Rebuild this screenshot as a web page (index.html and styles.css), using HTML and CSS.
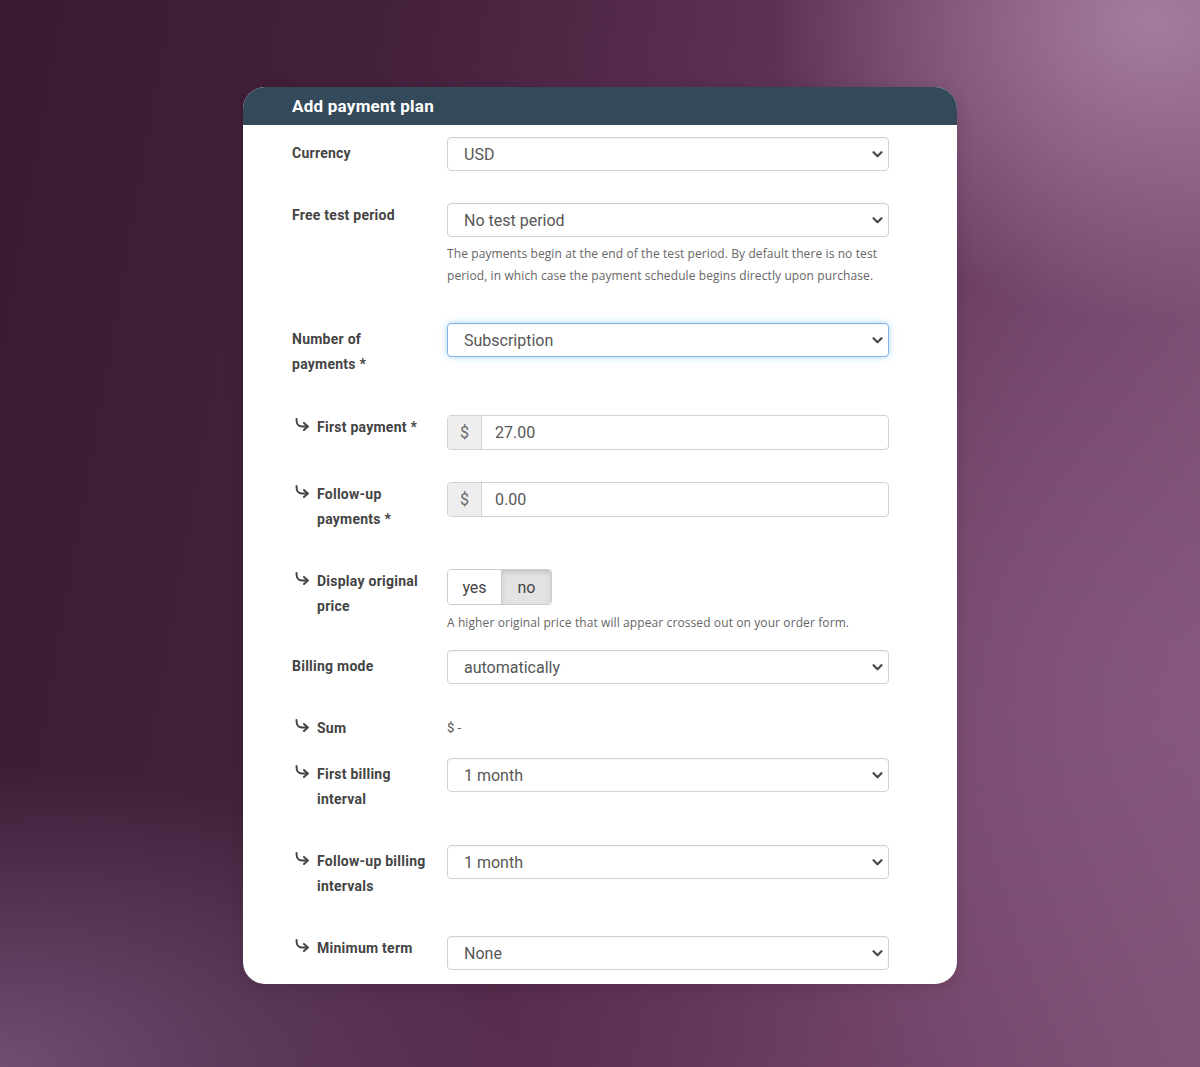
FILE: index.html
```html
<!DOCTYPE html>
<html lang="en">
<head>
<meta charset="utf-8">
<title>Add payment plan</title>
<link rel="stylesheet" href="styles.css">
</head>
<body>
<div class="page">
  <div class="card">
    <div class="card-head">Add payment plan</div>
    <div class="card-body">

      <div class="row">
        <div class="label">Currency</div>
        <div class="ctrl">
          <div class="select"><span>USD</span><svg class="chev" viewBox="0 0 12 8"><path d="M1.5 1.5 L6 6 L10.5 1.5"/></svg></div>
        </div>
      </div>

      <div class="row sp-32">
        <div class="label top">Free test period</div>
        <div class="ctrl">
          <div class="select"><span>No test period</span><svg class="chev" viewBox="0 0 12 8"><path d="M1.5 1.5 L6 6 L10.5 1.5"/></svg></div>
          <p class="help">The payments begin at the end of the test period. By default there is no test period, in which case the payment schedule begins directly upon purchase.</p>
        </div>
      </div>

      <div class="row sp-36">
        <div class="label">Number of payments&nbsp;*</div>
        <div class="ctrl">
          <div class="select focus"><span>Subscription</span><svg class="chev" viewBox="0 0 12 8"><path d="M1.5 1.5 L6 6 L10.5 1.5"/></svg></div>
        </div>
      </div>

      <div class="row sp-38">
        <div class="label top sub"><svg class="hook" viewBox="0 0 16 13"><path d="M2.5 1 C2.5 6 3.5 8.5 8 8.5 H13.5"/><path d="M10 5 L13.8 8.5 L10 12"/></svg><span>First payment&nbsp;*</span></div>
        <div class="ctrl">
          <div class="igroup"><span class="addon">$</span><span class="ival">27.00</span></div>
        </div>
      </div>

      <div class="row sp-32">
        <div class="label top sub"><svg class="hook" viewBox="0 0 16 13"><path d="M2.5 1 C2.5 6 3.5 8.5 8 8.5 H13.5"/><path d="M10 5 L13.8 8.5 L10 12"/></svg><span>Follow-up payments&nbsp;*</span></div>
        <div class="ctrl">
          <div class="igroup"><span class="addon">$</span><span class="ival">0.00</span></div>
        </div>
      </div>

      <div class="row sp-37">
        <div class="label top sub"><svg class="hook" viewBox="0 0 16 13"><path d="M2.5 1 C2.5 6 3.5 8.5 8 8.5 H13.5"/><path d="M10 5 L13.8 8.5 L10 12"/></svg><span>Display original price</span></div>
        <div class="ctrl">
          <div class="toggle"><span class="opt">yes</span><span class="opt on">no</span></div>
          <p class="help one">A higher original price that will appear crossed out on your order form.</p>
        </div>
      </div>

      <div class="row sp-16">
        <div class="label">Billing mode</div>
        <div class="ctrl">
          <div class="select"><span>automatically</span><svg class="chev" viewBox="0 0 12 8"><path d="M1.5 1.5 L6 6 L10.5 1.5"/></svg></div>
        </div>
      </div>

      <div class="row sp-28">
        <div class="label sub"><svg class="hook" viewBox="0 0 16 13"><path d="M2.5 1 C2.5 6 3.5 8.5 8 8.5 H13.5"/><path d="M10 5 L13.8 8.5 L10 12"/></svg><span>Sum</span></div>
        <div class="ctrl">
          <div class="static">$ -</div>
        </div>
      </div>

      <div class="row sp-17">
        <div class="label sub"><svg class="hook" viewBox="0 0 16 13"><path d="M2.5 1 C2.5 6 3.5 8.5 8 8.5 H13.5"/><path d="M10 5 L13.8 8.5 L10 12"/></svg><span>First billing interval</span></div>
        <div class="ctrl">
          <div class="select"><span>1 month</span><svg class="chev" viewBox="0 0 12 8"><path d="M1.5 1.5 L6 6 L10.5 1.5"/></svg></div>
        </div>
      </div>

      <div class="row sp-33">
        <div class="label sub"><svg class="hook" viewBox="0 0 16 13"><path d="M2.5 1 C2.5 6 3.5 8.5 8 8.5 H13.5"/><path d="M10 5 L13.8 8.5 L10 12"/></svg><span>Follow-up billing intervals</span></div>
        <div class="ctrl">
          <div class="select"><span>1 month</span><svg class="chev" viewBox="0 0 12 8"><path d="M1.5 1.5 L6 6 L10.5 1.5"/></svg></div>
        </div>
      </div>

      <div class="row sp-37">
        <div class="label top sub"><svg class="hook" viewBox="0 0 16 13"><path d="M2.5 1 C2.5 6 3.5 8.5 8 8.5 H13.5"/><path d="M10 5 L13.8 8.5 L10 12"/></svg><span>Minimum term</span></div>
        <div class="ctrl">
          <div class="select"><span>None</span><svg class="chev" viewBox="0 0 12 8"><path d="M1.5 1.5 L6 6 L10.5 1.5"/></svg></div>
        </div>
      </div>

    </div>
  </div>
</div>
</body>
</html>
```
FILE: styles.css
```css
* { box-sizing: border-box; }

html, body {
  margin: 0;
  padding: 0;
}

body {
  width: 1200px;
  height: 1067px;
  overflow: hidden;
  font-family: Roboto, "Liberation Sans", Arial, sans-serif;
  background:
    radial-gradient(ellipse 380px 300px at 96% 2%, rgba(172, 134, 166, 0.85), rgba(172, 134, 166, 0) 100%),
    radial-gradient(ellipse 520px 300px at 0% 100%, rgba(120, 86, 124, 0.85), rgba(120, 86, 124, 0) 100%),
    radial-gradient(ellipse 520px 460px at 100% 65%, rgba(142, 94, 132, 0.6), rgba(142, 94, 132, 0) 100%),
    linear-gradient(100deg, #3c1933 0%, #43203b 28%, #5c3051 55%, #74456a 80%, #805276 100%);
}

.page {
  padding-top: 87px;
  display: flex;
  justify-content: center;
}

.card {
  width: 714px;
  background: #ffffff;
  border-radius: 22px;
  overflow: hidden;
  box-shadow: 0 4px 16px rgba(20, 0, 20, 0.12);
}

.card-head {
  height: 38px;
  background: #344a5a;
  color: #ffffff;
  font-weight: 700;
  font-size: 17px;
  line-height: 38px;
  padding-left: 49px;
  letter-spacing: 0.25px;
}

.card-body {
  padding: 12px 68px 14px 49px;
  display: flex;
  flex-direction: column;
}

.row {
  display: grid;
  grid-template-columns: 140px 442px;
  column-gap: 15px;
  align-items: start;
}

.sp-16 { margin-top: 16px; }
.sp-17 { margin-top: 17px; }
.sp-28 { margin-top: 28px; }
.sp-32 { margin-top: 32px; }
.sp-33 { margin-top: 33px; }
.sp-36 { margin-top: 36px; }
.sp-37 { margin-top: 37px; }
.sp-38 { margin-top: 38px; }

.label {
  font-size: 14px;
  font-weight: 700;
  color: #444444;
  line-height: 25px;
  padding-top: 4px;
  letter-spacing: 0.25px;
}

.label.top { padding-top: 0; }

.label.sub {
  display: flex;
  align-items: flex-start;
}

.label.sub span { flex: 1; }

.hook {
  width: 16px;
  height: 13px;
  margin: 3px 7px 0 2px;
  flex: none;
  fill: none;
  stroke: #454545;
  stroke-width: 2;
  stroke-linecap: round;
  stroke-linejoin: round;
}

.ctrl {
  display: flex;
  flex-direction: column;
  align-items: flex-start;
}

.select {
  width: 442px;
  height: 34px;
  border: 1px solid #d2d2d2;
  border-radius: 4px;
  background: #ffffff;
  display: flex;
  align-items: center;
  justify-content: space-between;
  padding: 0 5px 0 16px;
  font-size: 16px;
  color: #575757;
  box-shadow: inset 0 1px 1px rgba(0, 0, 0, 0.04);
}

.select.focus {
  border-color: #7fb5e6;
  box-shadow: 0 0 7px rgba(102, 175, 233, 0.55), inset 0 1px 1px rgba(0, 0, 0, 0.05);
}

.chev {
  width: 11px;
  height: 7px;
  fill: none;
  stroke: #4a4a4a;
  stroke-width: 2.6;
  stroke-linecap: round;
  stroke-linejoin: round;
}

.help {
  margin: 6px 0 0 0;
  font-family: "Open Sans", Lato, sans-serif;
  font-size: 12px;
  line-height: 22px;
  color: #666666;
  width: 442px;
  letter-spacing: 0.1px;
}

.help.one { margin-top: 7px; }

.igroup {
  width: 442px;
  height: 35px;
  display: flex;
  border: 1px solid #d2d2d2;
  border-radius: 4px;
  overflow: hidden;
  font-size: 16px;
  color: #575757;
}

.addon {
  width: 34px;
  flex: none;
  background: #eeeeee;
  border-right: 1px solid #d2d2d2;
  display: flex;
  align-items: center;
  justify-content: center;
  color: #666666;
}

.ival {
  flex: 1;
  display: flex;
  align-items: center;
  padding-left: 13px;
}

.toggle {
  display: flex;
  height: 36px;
  border: 1px solid #cccccc;
  border-radius: 4px;
  overflow: hidden;
  font-size: 16px;
  color: #444444;
}

.opt {
  display: flex;
  align-items: center;
  justify-content: center;
  background: #ffffff;
}

.opt:first-child {
  width: 54px;
  border-right: 1px solid #cccccc;
}

.opt.on {
  width: 49px;
  background: #e3e3e3;
  box-shadow: inset 0 3px 5px rgba(0, 0, 0, 0.12);
}

.static {
  font-size: 13px;
  color: #555555;
  line-height: 25px;
  padding-top: 3px;
}
```
